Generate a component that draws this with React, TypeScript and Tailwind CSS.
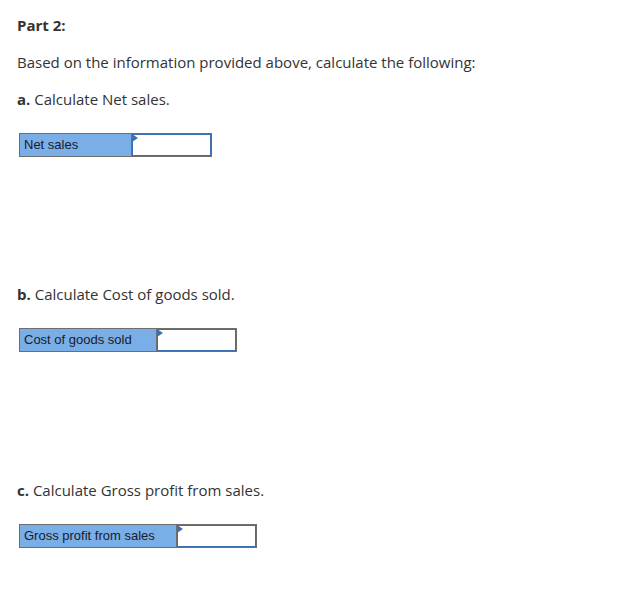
import React from "react";

type Item = { letter: string; label: string; labelWidth: string; gap: string };

const items: Item[] = [
  { letter: "a.", label: "Net sales", labelWidth: "w-[112px]", gap: "mt-[19px]" },
  { letter: "b.", label: "Cost of goods sold", labelWidth: "w-[137px]", gap: "mt-[128px]" },
  { letter: "c.", label: "Gross profit from sales", labelWidth: "w-[157px]", gap: "mt-[129px]" },
];

function AnswerRow({ label, labelWidth }: { label: string; labelWidth: string }) {
  return (
    <div className="flex border border-[#6e6e6e] h-[24px] w-fit">
      <div
        className={`${labelWidth} bg-[#7aaee6] border-r border-[#6e6e6e] pl-[4px] flex items-center text-[13px] text-[#1a1a2a] font-['Liberation_Sans',Arial,sans-serif]`}
      >
        {label}
      </div>
      <div className="relative w-[79px] bg-white border-[1.5px] border-[#3b6fb0]">
        <svg className="absolute -left-[1px] -top-[1px]" width="7" height="8" viewBox="0 0 7 8">
          <path d="M0 0 L6 4 L0 8 Z" fill="#3b6fb0" />
        </svg>
        <input className="w-full h-full outline-none bg-transparent text-[13px] px-1" />
      </div>
    </div>
  );
}

export default function App() {
  return (
    <div className="bg-white min-h-screen px-[17px] pt-[16px] font-['Open_Sans',sans-serif] text-[15px] text-[#333]">
      <h2 className="font-bold leading-[18px]">Part 2:</h2>
      <p className="mt-[19px] leading-[18px]">Based on the information provided above, calculate the following:</p>

      {items.map((item) => (
        <div key={item.letter} className={item.gap}>
          <p className="leading-[18px]">
            <span className="font-bold">{item.letter}</span> Calculate {item.label}.
          </p>
          <div className="mt-[25px] ml-[2px]">
            <AnswerRow label={item.label} labelWidth={item.labelWidth} />
          </div>
        </div>
      ))}
    </div>
  );
}
